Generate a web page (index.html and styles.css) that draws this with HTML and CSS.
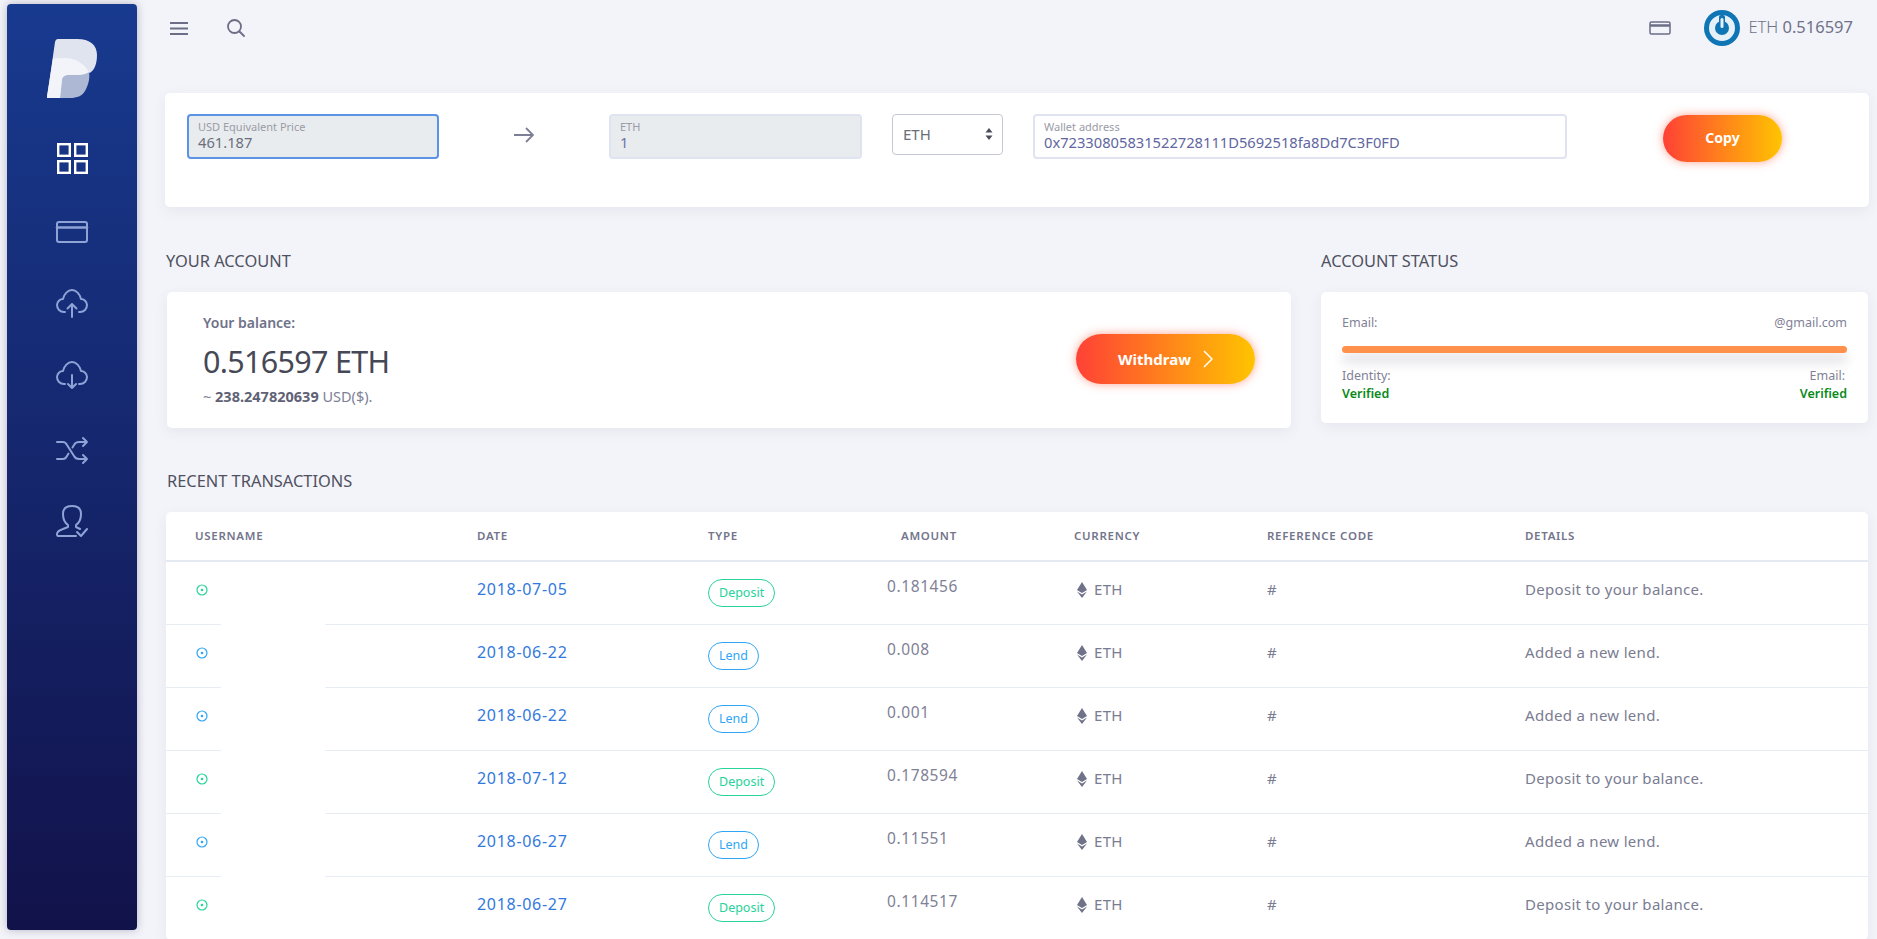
FILE: index.html
```html
<!DOCTYPE html>
<html lang="en">
<head>
<meta charset="utf-8">
<title>Dashboard</title>
<link rel="stylesheet" href="styles.css">
</head>
<body>
<div class="app">
  <aside class="sidebar">
    <svg class="logo" viewBox="0 0 50 60" width="50" height="60">
      <path d="M11 0 L30 0 C43 0 50 6 50 16 C50 27 46 33 42 34 L14 59 L0 59 L8 3 C8.500 1 9.500 0 11 0 Z" fill="#e0e4ee"/>
      <path d="M15 40 C16 38 17 36 22 36 L30 36 C36 36 40 35 42 33 C43 38 42 45 38 52 C35 57 30 59 23 59 L13 59 Z" fill="#adb8d4"/>
      <path d="M6 19.500 L18 19 C30 19 38 26 42 33 C38 35 34 36 30 36 L22 36 C17 36 16 38 15 40 L13 59 L1 59 C0 59 0 58 0 57 Z" fill="#f3f4f9"/>
    </svg>
    <nav class="side-nav">
      <svg class="side-icon active" viewBox="0 0 32 32"><rect x="2.200" y="1.200" width="11.600" height="11.600"/><rect x="19.200" y="1.200" width="11.600" height="11.600"/><rect x="2.200" y="18.200" width="11.600" height="11.600"/><rect x="19.200" y="18.200" width="11.600" height="11.600"/></svg>
      <svg class="side-icon" viewBox="0 0 32 32"><rect x="1" y="6" width="30" height="20" rx="2"/><path d="M1 11.500h30" stroke-width="2.600"/></svg>
      <svg class="side-icon" viewBox="0 0 32 32"><path d="M9 23 H8 C4 23 1 20 1 16 C1 12.500 4 10 7 10 C8 5 12 1 16 1 C20 1 24 5 25 10 C28 10 31 12.500 31 16 C31 20 28 23 24 23 H23"/><path d="M16 28 V15 M11.500 19.500 L16 15 L20.500 19.500"/></svg>
      <svg class="side-icon" viewBox="0 1 32 32"><path d="M9 23 H8 C4 23 1 20 1 16 C1 12.500 4 10 7 10 C8 5 12 1 16 1 C20 1 24 5 25 10 C28 10 31 12.500 31 16 C31 20 28 23 24 23 H23"/><path d="M16 14 V27 M12 23 L16 27 L20 23"/></svg>
      <svg class="side-icon" viewBox="0 0 32 32"><path d="M1 7 H7 C9 7 10 8 11 10 L18 21 C19 23 21 24 23 24 H31 M1 24 H7 C9 24 10 23 11 21 L12.500 18.500 M16.500 12.500 L18 10 C19 8 21 7 23 7 H31 M27 3 L31 7 L27 11 M27 20 L31 24 L27 28"/></svg>
      <svg class="side-icon user" viewBox="0 3 32 32"><path d="M20 31 H2 C1 31 1 30 1 29 C1 26 4 25 7 24 L12 22 V20 C9 18 7 14 7 9 C7 3 11 1 16 1 C21 1 25 3 25 9 C25 14 23 18 20 20 V22 L24 24"/><path d="M21 27 L25 31 L31 24"/></svg>
    </nav>
  </aside>

  <main class="main">
    <header class="topbar">
      <div class="top-left">
        <svg class="burger" viewBox="0 0 18 13" width="18" height="13"><path d="M0 1h18M0 6.500h18M0 12h18"/></svg>
        <svg class="search" viewBox="0 0 18 18" width="18" height="18"><circle cx="7.500" cy="7.500" r="6.500"/><path d="M12.500 12.500L17 17"/></svg>
      </div>
      <div class="top-right">
        <svg class="card-icon" viewBox="0 0 22 14" width="22" height="14"><rect x="1" y="1" width="20" height="12" rx="1.500"/><path d="M1 4.500h20" stroke-width="2.500"/></svg>
        <svg class="avatar" viewBox="0 0 36 36" width="36" height="36"><circle cx="18" cy="18" r="18" fill="#0f75b5"/><circle cx="18" cy="18" r="10" fill="none" stroke="#e6f0f7" stroke-width="6"/><rect x="15" y="5" width="6" height="14" rx="2" fill="#0f75b5"/><rect x="16.500" y="8" width="3" height="10" rx="1.500" fill="#e6f0f7"/></svg>
        <span class="top-balance"><span class="top-eth">ETH</span> 0.516597</span>
      </div>
    </header>

    <section class="card converter">
      <div class="field focused usd"><label>USD Equivalent Price</label><span class="value">461.187</span></div>
      <svg class="arrow" viewBox="0 0 20 16" width="20" height="16"><path d="M0 8h19M12 1l7 7-7 7"/></svg>
      <div class="field disabled eth"><label>ETH</label><span class="value">1</span></div>
      <div class="select">ETH<svg viewBox="0 0 8 12" width="8" height="12"><path d="M4 0l3.500 4.500h-7zM4 12L.5 7.500h7z"/></svg></div>
      <div class="field wallet"><label>Wallet address</label><span class="value">0x72330805831522728111D5692518fa8Dd7C3F0FD</span></div>
      <button class="btn copy">Copy</button>
    </section>

    <section class="account-row">
      <div class="account-col">
        <h2 class="heading">YOUR ACCOUNT</h2>
        <div class="card balance">
          <div class="balance-text">
            <div class="balance-label">Your balance:</div>
            <div class="balance-value">0.516597 ETH</div>
            <div class="balance-usd">~ <b>238.247820639</b> USD($).</div>
          </div>
          <button class="btn withdraw">Withdraw<svg viewBox="0 0 10 18" width="10" height="18"><path d="M1 1l8 8-8 8"/></svg></button>
        </div>
      </div>
      <div class="status-col">
        <h2 class="heading">ACCOUNT STATUS</h2>
        <div class="card status">
          <div class="status-line"><span>Email:</span><span>@gmail.com</span></div>
          <div class="bar"></div>
          <div class="status-line lower"><span>Identity:</span><span class="indent">Email:</span></div>
          <div class="status-line verified"><span>Verified</span><span>Verified</span></div>
        </div>
      </div>
    </section>

    <h2 class="heading recent">RECENT TRANSACTIONS</h2>
    <section class="card table-card">
      <div class="redact"></div>
      <table class="tx">
        <thead>
          <tr><th class="c-user">USERNAME</th><th class="c-date">DATE</th><th class="c-type">TYPE</th><th class="c-amt">AMOUNT</th><th class="c-cur">CURRENCY</th><th class="c-ref">REFERENCE CODE</th><th>DETAILS</th></tr>
        </thead>
        <tbody>
          <tr class="deposit"><td class="c-user"><svg class="dot" viewBox="0 0 12 12"><circle cx="6" cy="6" r="5"/><circle class="pip" cx="6" cy="6" r="1.300"/></svg></td><td class="c-date"><a>2018-07-05</a></td><td class="c-type"><span class="pill">Deposit</span></td><td class="c-amt"><span class="amt">0.181456</span></td><td class="c-cur"><svg class="eth-icon" viewBox="0 0 10 16"><path d="M5 0L10 8 5 11 0 8zM0 9.500L5 12.500 10 9.500 5 16z"/></svg>ETH</td><td class="c-ref">#</td><td>Deposit to your balance.</td></tr>
          <tr class="lend"><td class="c-user"><svg class="dot" viewBox="0 0 12 12"><circle cx="6" cy="6" r="5"/><circle class="pip" cx="6" cy="6" r="1.300"/></svg></td><td class="c-date"><a>2018-06-22</a></td><td class="c-type"><span class="pill">Lend</span></td><td class="c-amt"><span class="amt">0.008</span></td><td class="c-cur"><svg class="eth-icon" viewBox="0 0 10 16"><path d="M5 0L10 8 5 11 0 8zM0 9.500L5 12.500 10 9.500 5 16z"/></svg>ETH</td><td class="c-ref">#</td><td>Added a new lend.</td></tr>
          <tr class="lend"><td class="c-user"><svg class="dot" viewBox="0 0 12 12"><circle cx="6" cy="6" r="5"/><circle class="pip" cx="6" cy="6" r="1.300"/></svg></td><td class="c-date"><a>2018-06-22</a></td><td class="c-type"><span class="pill">Lend</span></td><td class="c-amt"><span class="amt">0.001</span></td><td class="c-cur"><svg class="eth-icon" viewBox="0 0 10 16"><path d="M5 0L10 8 5 11 0 8zM0 9.500L5 12.500 10 9.500 5 16z"/></svg>ETH</td><td class="c-ref">#</td><td>Added a new lend.</td></tr>
          <tr class="deposit"><td class="c-user"><svg class="dot" viewBox="0 0 12 12"><circle cx="6" cy="6" r="5"/><circle class="pip" cx="6" cy="6" r="1.300"/></svg></td><td class="c-date"><a>2018-07-12</a></td><td class="c-type"><span class="pill">Deposit</span></td><td class="c-amt"><span class="amt">0.178594</span></td><td class="c-cur"><svg class="eth-icon" viewBox="0 0 10 16"><path d="M5 0L10 8 5 11 0 8zM0 9.500L5 12.500 10 9.500 5 16z"/></svg>ETH</td><td class="c-ref">#</td><td>Deposit to your balance.</td></tr>
          <tr class="lend"><td class="c-user"><svg class="dot" viewBox="0 0 12 12"><circle cx="6" cy="6" r="5"/><circle class="pip" cx="6" cy="6" r="1.300"/></svg></td><td class="c-date"><a>2018-06-27</a></td><td class="c-type"><span class="pill">Lend</span></td><td class="c-amt"><span class="amt">0.11551</span></td><td class="c-cur"><svg class="eth-icon" viewBox="0 0 10 16"><path d="M5 0L10 8 5 11 0 8zM0 9.500L5 12.500 10 9.500 5 16z"/></svg>ETH</td><td class="c-ref">#</td><td>Added a new lend.</td></tr>
          <tr class="deposit"><td class="c-user"><svg class="dot" viewBox="0 0 12 12"><circle cx="6" cy="6" r="5"/><circle class="pip" cx="6" cy="6" r="1.300"/></svg></td><td class="c-date"><a>2018-06-27</a></td><td class="c-type"><span class="pill">Deposit</span></td><td class="c-amt"><span class="amt">0.114517</span></td><td class="c-cur"><svg class="eth-icon" viewBox="0 0 10 16"><path d="M5 0L10 8 5 11 0 8zM0 9.500L5 12.500 10 9.500 5 16z"/></svg>ETH</td><td class="c-ref">#</td><td>Deposit to your balance.</td></tr>
        </tbody>
      </table>
    </section>
  </main>
</div>
</body>
</html>
```
FILE: styles.css
```css
* { box-sizing: border-box; }
html, body { margin: 0; height: 939px; overflow: hidden; }
body { background: #f3f4f9; font-family: "Noto Sans", "Open Sans", sans-serif; color: #6f7289; }

.app { display: flex; height: 939px; padding: 4px 8px 0 7px; }

.sidebar {
  width: 130px; height: 926px; flex: none; border-radius: 4px;
  background: linear-gradient(180deg, #183a8f 0%, #12124a 100%);
  box-shadow: 0 0 8px rgba(60, 60, 100, .35);
  display: flex; flex-direction: column; align-items: center;
  padding-top: 35px;
}
.logo { display: block; }
.side-nav { display: flex; flex-direction: column; align-items: center; gap: 41px; margin-top: 44px; }
.side-icon { width: 32px; height: 32px; fill: none; stroke: #8ea3d6; stroke-width: 2; stroke-linecap: round; stroke-linejoin: round; display: block; overflow: visible; }
.side-icon.active { stroke: #fff; stroke-width: 2.400; stroke-linecap: butt; stroke-linejoin: miter; }

.main { flex: 1; min-width: 0; margin-left: 28px; }

.topbar { height: 89px; display: flex; justify-content: space-between; padding: 12px 16px 0 5px; }
.top-left { display: flex; gap: 39px; height: 24px; align-items: center; }
.burger { fill: none; stroke: #6b6e86; stroke-width: 2; }
.search { fill: none; stroke: #6b6e86; stroke-width: 1.800; stroke-linecap: round; }
.top-right { display: flex; align-items: center; height: 24px; }
.card-icon { fill: none; stroke: #6b6e86; stroke-width: 1.500; margin-right: 33px; }
.avatar { margin-right: 8px; }
.top-balance { font-size: 16.500px; color: #6f7289; margin-bottom: 4px; }
.top-eth { font-weight: 300; }

.card { background: #fff; border-radius: 5px; box-shadow: 0 4px 14px rgba(70, 75, 120, .07); }

.converter { height: 114px; padding: 21px 0 0 22px; display: flex; align-items: flex-start; }
.field { height: 45px; border: 2px solid #e0e3f0; border-radius: 4px; padding: 4px 9px 3px; display: flex; flex-direction: column; background: #fff; }
.field label { font-size: 11px; line-height: 13px; color: #9a9ba5; }
.field .value { font-size: 14.700px; line-height: 19px; color: #5f66a0; }
.usd { width: 252px; background: #e9ecef; border-color: #5b93e6; }
.usd .value { color: #6b6f7d; }
.eth { width: 253px; background: #e9ecef; margin-left: 75px; }
.eth .value { color: #6e76a5; }
.arrow { margin: 13px 0 0 75px; fill: none; stroke: #7d7f95; stroke-width: 1.800; }
.select { width: 111px; height: 41px; margin-left: 30px; border: 1px solid #c5c8d6; border-radius: 4px; padding: 0 10px 2px; display: flex; justify-content: space-between; align-items: center; font-size: 15px; color: #6b6e76; background: #fff; }
.select svg { fill: #4a4d5c; margin-right: -1px; }
.wallet { width: 534px; margin-left: 30px; }
.btn { border: 0; color: #fff; font-family: inherit; font-weight: 700; background: linear-gradient(90deg, #ff4136 0%, #ffc400 100%); box-shadow: 0 0 10px rgba(255, 90, 60, .55); }
.copy { width: 119px; height: 47px; border-radius: 24px; margin: 1px 0 0 96px; padding-bottom: 3px; font-size: 14px; }

.account-row { display: flex; }
.account-col { width: 1124px; margin-left: 2px; }
.status-col { width: 547px; margin-left: 30px; }
.heading { margin: 0; font-size: 16.400px; font-weight: 400; color: #4f5160; line-height: 20px; }
.account-row .heading { padding-top: 44px; height: 85px; margin-left: -1px; }
.status-col .heading { margin-left: 0; }
.balance { height: 136px; display: flex; justify-content: space-between; align-items: center; padding: 0 36px; }
.balance-text { margin-top: -2px; }
.balance-label { font-size: 14px; font-weight: 600; color: #6f7289; line-height: 20px; }
.balance-value { font-size: 30.500px; letter-spacing: -.7px; color: #464856; line-height: 40px; margin-top: 8px; }
.balance-usd { font-size: 14.500px; color: #7d8096; line-height: 20px; margin-top: 5px; }
.balance-usd b { color: #5f6276; font-weight: 700; }
.withdraw { width: 179px; height: 50px; border-radius: 25px; font-size: 15px; display: flex; align-items: center; justify-content: center; gap: 12px; margin: -2px 0 0; }
.withdraw svg { fill: none; stroke: #fff; stroke-width: 1.500; }
.status { height: 131px; padding: 22px 21px 0 21px; font-size: 12.500px; color: #7f8196; }
.status-line { display: flex; justify-content: space-between; line-height: 18px; }
.bar { height: 7px; background: #ff914d; border-radius: 4px; margin-top: 14px; box-shadow: 0 9px 12px rgba(60, 60, 100, .2); }
.lower { margin-top: 14px; }
.indent { padding-right: 2px; }
.verified { color: #0a8a1a; font-weight: 600; line-height: 17px; }

.recent { margin: 43px 0 0 2px; height: 41px; }

.table-card { margin: 0 1px 0 1px; position: relative; overflow: hidden; }
.redact { position: absolute; left: 55px; top: 110px; width: 104px; height: 260px; background: #fff; }
.tx { width: 100%; border-collapse: collapse; table-layout: fixed; font-size: 15px; }
.tx th { height: 49px; padding: 0 0 1px; text-align: left; font-size: 11.500px; font-weight: 600; letter-spacing: .7px; color: #73758c; border-bottom: 2px solid #e4e9f2; }
.tx td { height: 63px; padding: 0 0 7px; border-bottom: 1px solid #e8ecf3; color: #7a7c92; vertical-align: middle; letter-spacing: .3px; }
.tx th:first-child, .tx td:first-child { padding-left: 29px; }
.c-user { width: 311px; }
.c-date { width: 231px; }
.c-type { width: 179px; }
.c-amt { width: 187px; }
.c-cur { width: 193px; }
.c-ref { width: 258px; }
.tx th.c-amt { padding-left: 14px; }
.dot { width: 12px; height: 12px; display: block; margin: 2px 0 0 1px; fill: none; stroke-width: 1.200; }
.pip { stroke: none; }
.deposit .dot { stroke: #26d39a; }
.deposit .pip { fill: #26d39a; }
.lend .dot { stroke: #2ea6f5; }
.lend .pip { fill: #2ea6f5; }
.tx a { color: #3279dd; font-size: 16px; letter-spacing: .7px; position: relative; top: 0; }
.pill { display: inline-block; height: 28px; line-height: 25px; border-radius: 14px; padding: 0 10px; font-size: 12.500px; letter-spacing: 0; border: 1px solid; position: relative; top: 4px; }
.deposit .pill { color: #26d39a; border-color: #26d39a; }
.lend .pill { color: #2ea6f5; border-color: #2ea6f5; }
.amt { position: relative; top: -3px; color: #7f8196; font-size: 15.500px; letter-spacing: .6px; }
.eth-icon { width: 10px; height: 16px; fill: #6f7289; margin-right: 7px; vertical-align: -3px; margin-left: 3px; }
```
